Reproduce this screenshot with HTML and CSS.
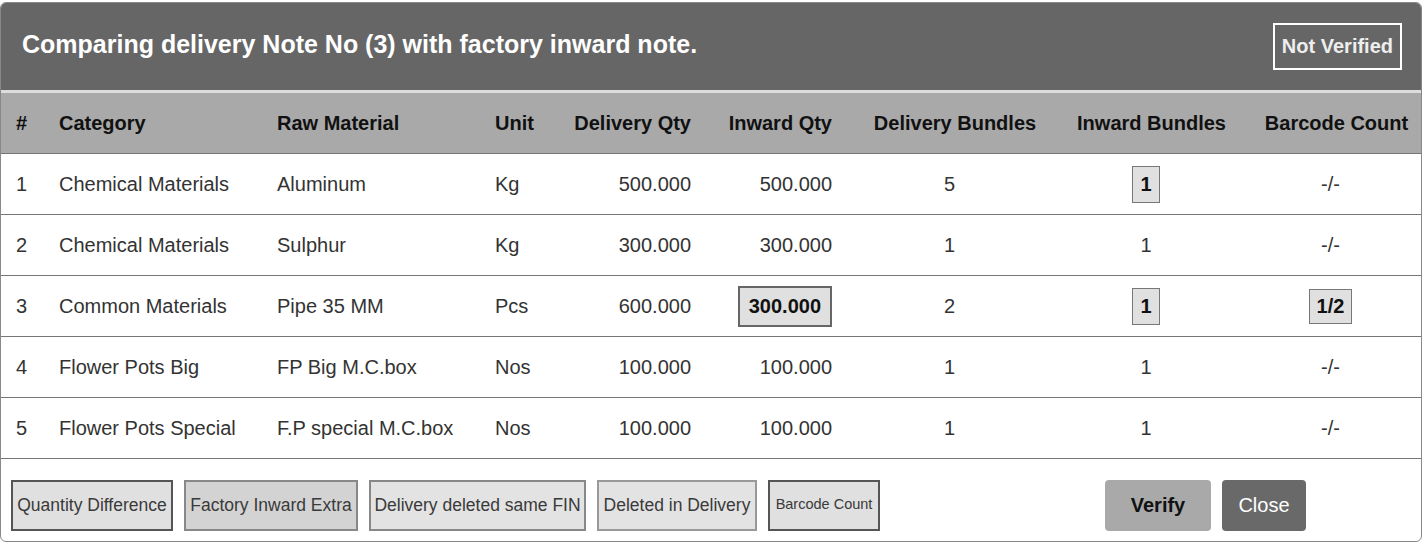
FILE: index.html
```html
<!DOCTYPE html>
<html lang="en">
<head>
    <meta charset="UTF-8">
    <meta name="viewport" content="width=device-width, initial-scale=1.0">
    <title>Delivery Note Comparison</title>
    <link rel="stylesheet" href="styles.css">
</head>
<body>

<div class="modal">
    <div class="modal-header">
        <h2>Comparing delivery Note No (3) with factory inward note.</h2>
        <span class="status">Not Verified</span>
    </div>

    <table class="compare">
        <colgroup>
            <col style="width:43px">
            <col style="width:218px">
            <col style="width:218px">
            <col style="width:80px">
            <col style="width:146px">
            <col style="width:141px">
            <col style="width:216px">
            <col style="width:177px">
            <col style="width:181px">
        </colgroup>
        <tr>
            <th>#</th>
            <th>Category</th>
            <th>Raw Material</th>
            <th>Unit</th>
            <th class="num">Delivery Qty</th>
            <th class="num">Inward Qty</th>
            <th class="mid">Delivery Bundles</th>
            <th class="mid">Inward Bundles</th>
            <th class="mid last">Barcode Count</th>
        </tr>
        <tr>
            <td>1</td>
            <td>Chemical Materials</td>
            <td>Aluminum</td>
            <td>Kg</td>
            <td class="num">500.000</td>
            <td class="num">500.000</td>
            <td class="mid">5</td>
            <td class="mid"><span class="mark">1</span></td>
            <td class="mid last">-/-</td>
        </tr>
        <tr>
            <td>2</td>
            <td>Chemical Materials</td>
            <td>Sulphur</td>
            <td>Kg</td>
            <td class="num">300.000</td>
            <td class="num">300.000</td>
            <td class="mid">1</td>
            <td class="mid">1</td>
            <td class="mid last">-/-</td>
        </tr>
        <tr>
            <td>3</td>
            <td>Common Materials</td>
            <td>Pipe 35 MM</td>
            <td>Pcs</td>
            <td class="num">600.000</td>
            <td class="num"><span class="mark mark-qty">300.000</span></td>
            <td class="mid">2</td>
            <td class="mid"><span class="mark">1</span></td>
            <td class="mid last"><span class="mark mark-code">1/2</span></td>
        </tr>
        <tr>
            <td>4</td>
            <td>Flower Pots Big</td>
            <td>FP Big M.C.box</td>
            <td>Nos</td>
            <td class="num">100.000</td>
            <td class="num">100.000</td>
            <td class="mid">1</td>
            <td class="mid">1</td>
            <td class="mid last">-/-</td>
        </tr>
        <tr>
            <td>5</td>
            <td>Flower Pots Special</td>
            <td>F.P special M.C.box</td>
            <td>Nos</td>
            <td class="num">100.000</td>
            <td class="num">100.000</td>
            <td class="mid">1</td>
            <td class="mid">1</td>
            <td class="mid last">-/-</td>
        </tr>
    </table>

    <div class="modal-footer">
        <div class="legend">
            <span class="key key-qty">Quantity Difference</span>
            <span class="key key-extra">Factory Inward Extra</span>
            <span class="key key-fin">Delivery deleted same FIN</span>
            <span class="key key-del">Deleted in Delivery</span>
            <span class="key key-code">Barcode Count</span>
        </div>
        <div class="actions">
            <button class="btn btn-verify">Verify</button>
            <button class="btn btn-close">Close</button>
        </div>
    </div>
</div>

</body>
</html>
```

FILE: styles.css
```css
body {
    margin: 0;
    font-family: 'Liberation Sans', Arial, sans-serif;
    background-color: #fff;
    color: #333;
}

.modal {
    width: 1420px;
    margin-top: 2px;
    border: 1px solid #888;
    border-radius: 6px;
    overflow: hidden;
    background-color: #fff;
}

.modal-header {
    display: flex;
    justify-content: space-between;
    align-items: center;
    height: 90px;
    padding: 0 19px 0 21px;
    background-color: #666;
    border-bottom: 3px solid #ddd;
    box-sizing: border-box;
}

.modal-header h2 {
    margin: 0 0 4px 0;
    font-size: 25px;
    font-weight: bold;
    color: #fff;
}

.status {
    padding: 10px 7px;
    border: 2px solid #fff;
    color: #eee;
    font-size: 20px;
    font-weight: bold;
}

/* comparison table */
.compare {
    width: 1420px;
    table-layout: fixed;
    border-collapse: collapse;
    font-size: 20px;
}

.compare th {
    height: 60px;
    padding: 0 0 0 15px;
    background-color: #a9a9a9;
    color: #111;
    text-align: left;
    font-weight: bold;
    border-bottom: 1px solid #777;
}

.compare td {
    height: 60px;
    padding: 0 0 0 15px;
    border-bottom: 1px solid #777;
    color: #333;
}

.compare .num {
    text-align: right;
    padding: 0 15px 0 0;
}

.compare th.mid {
    text-align: center;
    padding: 0;
}

.compare th.last {
    padding-left: 12px;
}

.compare td.mid {
    text-align: center;
    padding: 0 11px 0 0;
}

.compare td.last {
    padding: 0;
}

.mark {
    display: inline-block;
    padding: 6px 7px;
    border: 1px solid #777;
    background-color: #e0e0e0;
    color: #111;
    font-weight: bold;
    line-height: 23px;
}

.mark-qty {
    padding: 7px 9px;
    border: 2px solid #666;
}

.mark-code {
    padding: 5px 7px;
}

/* footer */
.modal-footer {
    display: flex;
    align-items: center;
    padding: 21px 0 10px 10px;
}

.legend {
    display: flex;
    gap: 11px;
}

.key {
    display: flex;
    align-items: center;
    justify-content: center;
    height: 51px;
    padding: 0;
    border: 2px solid #888;
    box-sizing: border-box;
    background-color: #e3e3e3;
    color: #3a3a3a;
    font-size: 17.5px;
    white-space: nowrap;
}

.key-qty {
    width: 162px;
    border-color: #555;
    background-color: #e0e0e0;
}

.key-extra {
    width: 174px;
    background-color: #d3d3d3;
}

.key-fin {
    width: 217px;
}

.key-del {
    width: 160px;
    border-color: #999;
}

.key-code {
    width: 112px;
    padding-bottom: 4px;
    border-color: #555;
    background-color: #e0e0e0;
    font-size: 14.5px;
}

.actions {
    display: flex;
    gap: 11px;
    margin-left: 225px;
}

.btn {
    height: 51px;
    border: none;
    border-radius: 4px;
    font-family: 'Liberation Sans', Arial, sans-serif;
    font-size: 20px;
    cursor: pointer;
}

.btn-verify {
    width: 106px;
    background-color: #a9a9a9;
    color: #111;
    font-weight: bold;
}

.btn-close {
    width: 84px;
    background-color: #696969;
    color: #fff;
}
```
